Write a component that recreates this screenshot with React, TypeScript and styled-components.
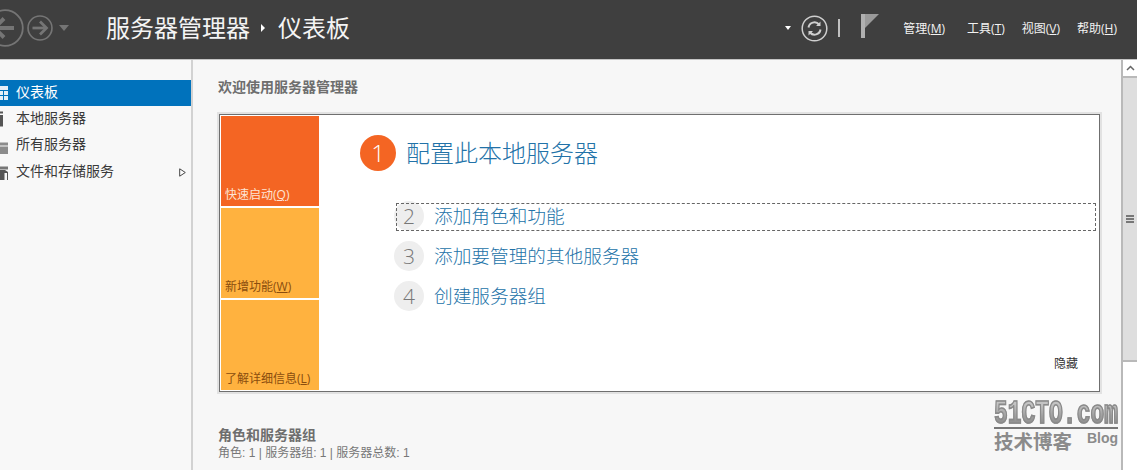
import React from "react";
import styled, { createGlobalStyle } from "styled-components";

const Global = createGlobalStyle`
  html, body { margin: 0; padding: 0; width: 1137px; height: 470px; overflow: hidden; background: #f7f7f7; }
  * { box-sizing: border-box; }
`;
const CJK = `"Open Sans", "Noto Sans CJK SC", sans-serif`;

const Page = styled.div`
  width: 1137px; height: 470px; display: flex; flex-direction: column; overflow: hidden; position: relative;
  font-family: ${CJK}; background: #f7f7f7;
`;
const Header = styled.header`
  flex: 0 0 60px; height: 60px; background: #3f3f3f; border-bottom: 1px solid #c4c4c4; padding-bottom: 3px;
  display: flex; align-items: center; color: #fff;
`;
const NavIcons = styled.div`
  flex: 0 0 115px; display: flex; align-items: center; margin-left: -14px;
`;
const Crumbs = styled.div`
  display: flex; align-items: center; font-size: 24px; color: #f4f4f4; margin-left: 5px; line-height: 30px;
`;
const CrumbArrow = styled.span`
  width: 0; height: 0; border-left: 4px solid #fff; border-top: 4px solid transparent; border-bottom: 4px solid transparent;
  margin: 0 13px 0 11px;
`;
const Tools = styled.div`
  margin-left: auto; display: flex; align-items: center; padding-right: 20px;
`;
const Divider = styled.span`
  width: 2px; height: 18px; background: #c0c0c0; margin: 0 21px 0 10px;
`;
const Flag = styled.svg`
  flex: none; margin-top: -4px;
`;
const Menus = styled.nav`
  display: flex; margin-left: 24px; font-size: 12px; color: #f2f2f2;
`;
const MenuItem = styled.span<{ $gap?: number }>`
  white-space: nowrap; margin-right: ${(p) => p.$gap ?? 0}px;
  u { text-underline-offset: 1px; }
`;
const Body = styled.div`
  flex: 1; display: flex; min-height: 0;
`;
const Sidebar = styled.aside`
  flex: 0 0 193px; background: #f8f8f8; border-right: 2px solid #d2d2d2; padding-top: 20px;
`;
const SideRow = styled.div<{ $active?: boolean }>`
  height: 26.33px; display: flex; align-items: center; font-size: 14px; line-height: 18px; padding-bottom: 3px;
  color: ${(p) => (p.$active ? "#fff" : "#3a3a3a")};
  background: ${(p) => (p.$active ? "#0072bc" : "transparent")};
  padding-right: 3px;
`;
const SideIcon = styled.svg`
  flex: 0 0 8px; width: 8px; height: 16px; margin: 3px 8px 0 0;
`;
const SideCaret = styled.svg`
  margin: 4px 2px 0 auto; width: 7px; height: 9px;
`;
const Main = styled.main`
  flex: 1; padding: 18px 0 0 25px; min-width: 0; color: #666;
`;
const Heading = styled.h2`
  margin: 0 0 19px; font-size: 14px; line-height: 17px; font-weight: 700; color: #6e6e6e;
`;
const Card = styled.section`
  width: 881px; height: 278px; background: #fff; border: 1px solid #6f6f6f;
  box-shadow: 0 0 0 2px #e2e2e2; display: flex; padding: 1px; margin-left: 1px;
`;
const Tiles = styled.div`
  flex: 0 0 98px; display: flex; flex-direction: column; gap: 2px;
`;
const Tile = styled.div<{ $active?: boolean }>`
  flex: 1; background: ${(p) => (p.$active ? "#f46523" : "#ffb23f")};
  color: ${(p) => (p.$active ? "#fde4d4" : "#8a4d0e")};
  font-size: 12px; display: flex; align-items: flex-end; padding: 0 0 3px 4px; line-height: 16px;
`;
const Steps = styled.div`
  flex: 1; position: relative; padding: 19px 0 0 41px;
`;
const Lead = styled.div`
  display: flex; align-items: center; height: 36px; margin-bottom: 25px;
`;
const LeadNum = styled.span`
  width: 36px; height: 36px; border-radius: 50%; background: #f46523; color: #fff;
  font: 300 24px/36px "Open Sans", sans-serif; text-align: center; flex: none;
`;
const LeadText = styled.span`
  font-size: 24px; font-weight: 300; color: #2272a8; margin-left: 10px; line-height: 36px;
`;
const Step = styled.div<{ $focus?: boolean }>`
  display: flex; align-items: center; height: 40px; margin-left: 34px; position: relative;
  font-size: 18.67px; font-weight: 300; color: #2272a8;
  ${(p) => p.$focus && `
    &::after { content: ""; position: absolute; left: 2px; right: 2px; top: 7px; height: 26px; border: 1px dashed #666; }
  `}
`;
const StepNum = styled.span`
  width: 30px; height: 30px; border-radius: 50%; background: #eee; color: #777;
  font: 300 21px/30px "Open Sans", sans-serif; text-align: center; flex: none; margin-right: 10px;
`;
const StepText = styled.span`
  margin-bottom: 3px;
`;
const Hide = styled.span`
  position: absolute; right: 20px; bottom: 18px; font-size: 12px; color: #333;
`;
const Roles = styled.div`
  margin-top: 34px;
`;
const RolesTitle = styled.div`
  font-size: 14px; font-weight: 700; color: #6e6e6e; line-height: 17px;
`;
const RolesInfo = styled.div`
  font-family: "Liberation Sans", "Noto Sans CJK SC", sans-serif;
  font-size: 12px; color: #777; line-height: 16px; margin-top: 2px;
`;
const Scrollbar = styled.div`
  flex: 0 0 16px; background: #fff; border-left: 2px solid #b9b9b9; display: flex; flex-direction: column;
`;
const ScrollUp = styled.div`
  height: 18px; background: #fff; border-bottom: 2px solid #b9b9b9; display: flex; align-items: center; justify-content: center;
`;
const ScrollThumb = styled.div`
  height: 284px; background: #dedede; border-bottom: 2px solid #b9b9b9; display: flex; align-items: center; justify-content: center;
`;
const Grip = styled.div`
  width: 8px; height: 8px;
  background: repeating-linear-gradient(#777 0 2px, transparent 2px 3px);
`;
const Watermark = styled.div`
  position: absolute; left: 994px; top: 397px; width: 124px; pointer-events: none;
`;
const WmLogo = styled.div`
  height: 32px; border-bottom: 2px solid #777;
`;
const WmLogoText = styled.span`
  display: inline-block; font: 700 34px/34px "Liberation Mono", monospace; white-space: nowrap;
  transform: scaleX(0.675); transform-origin: left top;
  background: linear-gradient(#c4c4c4 20%, #a0a0a0 55%, #8a8a8a 85%);
  -webkit-background-clip: text; background-clip: text; color: transparent;
  -webkit-text-stroke: 1.6px #8a8a8a;
`;
const WmBottom = styled.div`
  display: flex; justify-content: space-between;
`;
const WmCn = styled.span`
  font-size: 19.5px; font-weight: 700; line-height: 26px; color: #8b8b8b;
`;
const WmBlog = styled.span`
  font: 700 14px/17px "Liberation Sans", sans-serif; color: #8b8b8b; margin-top: 1px;
`;

const ArrowLeft = () => (
  <svg width={38} height={38} viewBox="0 0 38 38" fill="none" stroke="#757575" style={{ marginRight: 3, flex: "none" }}>
    <circle cx="19" cy="19" r="17.8" strokeWidth="1.800" />
    <path d="M9 19h19" strokeWidth="4" />
    <path d="M18 9.500 8.500 19l9.500 9.500" strokeWidth="4" />
  </svg>
);
const ArrowRight = () => (
  <svg width={26} height={26} viewBox="0 0 38 38" fill="none" stroke="#757575" style={{ flex: "none" }}>
    <circle cx="19" cy="19" r="17.500" strokeWidth="2.400" />
    <path d="M8 19h20" strokeWidth="4" />
    <path d="M19 9.500 28.500 19 19 28.500" strokeWidth="4" />
  </svg>
);

export default function App() {
  return (
    <Page>
      <Global />
      <Header>
        <NavIcons>
          <ArrowLeft />
          <ArrowRight />
          <svg width="10" height="6" viewBox="0 0 10 6" style={{ marginLeft: 6 }}><path d="M0 0h10L5 6z" fill="#757575" /></svg>
        </NavIcons>
        <Crumbs>
          服务器管理器<CrumbArrow />仪表板
        </Crumbs>
        <Tools>
          <svg width="6" height="4" viewBox="0 0 6 4"><path d="M0 0h6L3 4z" fill="#fff" /></svg>
          <svg width="27" height="27" viewBox="0 0 27 27" fill="none" stroke="#cfcfcf" style={{ marginLeft: 10 }}>
            <circle cx="13.500" cy="13.500" r="12.300" strokeWidth="1.500" />
            <path d="M7.500 12.500a6 6 0 0 1 10.500-3" strokeWidth="2" />
            <path d="M19.500 14.500a6 6 0 0 1-10.500 3" strokeWidth="2" />
            <path d="M19.500 6.500v4.500H15z M7.500 20.500V16H12z" fill="#cfcfcf" stroke="none" />
          </svg>
          <Divider />
          <Flag width="18" height="24" viewBox="0 0 18 24">
            <path d="M0 0h4v24H0z" fill="#b0b0b0" />
            <path d="M4 0h14L4 14z" fill="#9a9a9a" />
          </Flag>
          <Menus>
            <MenuItem $gap={22}>管理(<u>M</u>)</MenuItem>
            <MenuItem $gap={17}>工具(<u>T</u>)</MenuItem>
            <MenuItem $gap={17}>视图(<u>V</u>)</MenuItem>
            <MenuItem>帮助(<u>H</u>)</MenuItem>
          </Menus>
        </Tools>
      </Header>
      <Body>
        <Sidebar>
          <SideRow $active>
            <SideIcon viewBox="0 0 8 16"><path d="M0 1h8v4H0zM0 6h3v4H0zM4 6h4v4H4zM0 11h3v4H0zM4 11h4v4H4z" fill="#e4eff7" /></SideIcon>
            仪表板
          </SideRow>
          <SideRow>
            <SideIcon viewBox="0 0 8 16"><path d="M0 .500h3v2H0zM0 4h3v11.500H0z" fill="#555" /></SideIcon>
            本地服务器
          </SideRow>
          <SideRow>
            <SideIcon viewBox="0 0 8 16"><path d="M0 4.500h8v3H0zM0 8.500h8V16H0z" fill="#8c8c8c" /></SideIcon>
            所有服务器
          </SideRow>
          <SideRow>
            <SideIcon viewBox="0 0 8 16"><path d="M0 2.500h8v3H0z" fill="#777" /><path d="M0 6h5l3 2v8H0z" fill="#555" /><path d="M4.500 9H7v7H4.500z" fill="#f8f8f8" /></SideIcon>
            文件和存储服务
            <SideCaret viewBox="0 0 7 9"><path d="M.7.800 6.300 4.500.7 8.200z" fill="#fff" stroke="#444" /></SideCaret>
          </SideRow>
        </Sidebar>
        <Main>
          <Heading>欢迎使用服务器管理器</Heading>
          <Card>
            <Tiles>
              <Tile $active>快速启动(<u>Q</u>)</Tile>
              <Tile>新增功能(<u>W</u>)</Tile>
              <Tile>了解详细信息(<u>L</u>)</Tile>
            </Tiles>
            <Steps>
              <Lead><LeadNum>1</LeadNum><LeadText>配置此本地服务器</LeadText></Lead>
              <Step $focus><StepNum>2</StepNum><StepText>添加角色和功能</StepText></Step>
              <Step><StepNum>3</StepNum><StepText>添加要管理的其他服务器</StepText></Step>
              <Step><StepNum>4</StepNum><StepText>创建服务器组</StepText></Step>
              <Hide>隐藏</Hide>
            </Steps>
          </Card>
          <Roles>
            <RolesTitle>角色和服务器组</RolesTitle>
            <RolesInfo>角色: 1 | 服务器组: 1 | 服务器总数: 1</RolesInfo>
          </Roles>
        </Main>
        <Scrollbar>
          <ScrollUp>
            <svg width="9" height="6" viewBox="0 0 9 6" fill="none" stroke="#666" strokeWidth="1.500"><path d="M1 5l3.500-3.500L8 5" /></svg>
          </ScrollUp>
          <ScrollThumb><Grip /></ScrollThumb>
        </Scrollbar>
      </Body>
      <Watermark>
        <WmLogo><WmLogoText>51CTO.com</WmLogoText></WmLogo>
        <WmBottom><WmCn>技术博客</WmCn><WmBlog>Blog</WmBlog></WmBottom>
      </Watermark>
    </Page>
  );
}
